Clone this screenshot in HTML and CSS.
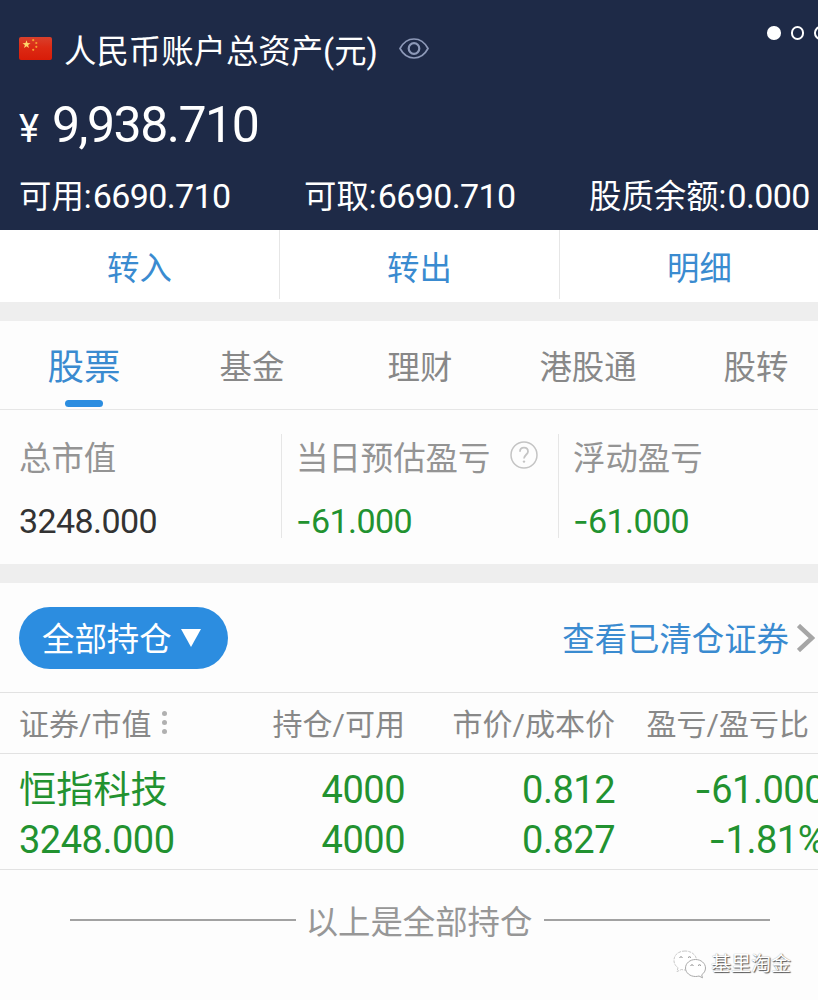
FILE: index.html
```html
<!DOCTYPE html>
<html lang="zh-CN">

<head>
  <meta charset="UTF-8">
  <meta name="viewport" content="width=device-width, initial-scale=1.0">
  <title>资产</title>
  <link rel="stylesheet" href="styles.css">
</head>

<body>
  <div class="page">
    <!-- 总资产 -->
    <div class="asset">
      <div class="dots"><i class="on"></i><i></i><i></i></div>
      <div class="asset-t">
        <svg class="flag" viewBox="0 0 33 23" width="33" height="23">
          <defs>
            <linearGradient id="red" x1="0" y1="0" x2="0" y2="1">
              <stop offset="0" stop-color="#d8402c" />
              <stop offset=".45" stop-color="#dc2a14" />
              <stop offset="1" stop-color="#d81c08" />
            </linearGradient>
          </defs>
          <rect width="33" height="23" rx="2" fill="url(#red)" />
          <path d="M7.500 3.200l1 2.900 3 .1-2.400 1.800.8 2.900-2.400-1.700-2.500 1.700.9-2.900L3.500 6.200l3-.1z" fill="#ffd76a" />
          <g fill="#f5a030">
            <circle cx="14.200" cy="3.200" r="1.100" />
            <circle cx="17.300" cy="6" r="1.100" />
            <circle cx="17.300" cy="9.800" r="1.100" />
            <circle cx="14.200" cy="12.800" r="1.100" />
          </g>
        </svg>
        <span class="title">人民币账户总资产(元)</span>
        <svg class="eye" viewBox="0 0 30 21" width="30" height="21" fill="none" stroke="#8d99b8" stroke-width="1.700">
          <path d="M1 10.500C4.500 4 9.500 1 15 1s10.500 3 14 9.500C25.500 17 20.500 20 15 20S4.500 17 1 10.500z" />
          <circle cx="15" cy="10.500" r="5.300" stroke-width="2.200" />
        </svg>
      </div>
      <div class="asset-n"><span class="yen">¥</span><span class="total">9,938.710</span></div>
      <div class="asset-f">
        <div>可用:<span class="num">6690.710</span></div>
        <div>可取:<span class="num">6690.710</span></div>
        <div>股质余额:<span class="num">0.000</span></div>
      </div>
    </div>

    <div class="actions">
      <a>转入</a>
      <a>转出</a>
      <a>明细</a>
    </div>

    <div class="tabs">
      <div class="tab active">股票</div>
      <div class="tab">基金</div>
      <div class="tab">理财</div>
      <div class="tab">港股通</div>
      <div class="tab">股转</div>
    </div>

    <div class="stats">
      <div class="stat">
        <div class="stat-t">总市值</div>
        <div class="stat-n">3248.000</div>
      </div>
      <div class="stat">
        <div class="stat-t">当日预估盈亏
          <svg class="help" viewBox="0 0 28 28" width="28" height="28" fill="none" stroke="#c4c4c4" stroke-width="1.500">
            <circle cx="14" cy="14" r="13" />
            <path d="M10 10.800c0-2.600 1.700-4.200 4-4.200s4 1.500 4 3.800c0 3.200-4 3.600-4 7.200" stroke-width="1.800" />
            <circle cx="14" cy="20.600" r="1.200" fill="#c4c4c4" stroke="none" />
          </svg>
        </div>
        <div class="stat-n green"><span class="minus">-</span>61.000</div>
      </div>
      <div class="stat">
        <div class="stat-t">浮动盈亏</div>
        <div class="stat-n green"><span class="minus">-</span>61.000</div>
      </div>
    </div>

    <!-- 持仓 -->
    <div class="bar">
      <div class="pill"><span>全部持仓</span>
        <svg viewBox="0 0 20 18" width="20" height="18"><path d="M0 0h20L10 18z" fill="#fff" /></svg>
      </div>
      <div class="link"><span>查看已清仓证券</span>
        <svg viewBox="0 0 18 28" width="18" height="28"><path d="M1.500 1.500L15 14 1.500 26.500" fill="none" stroke="#a6a6a6" stroke-width="4.500" /></svg>
      </div>
    </div>

    <div class="row head">
      <div>证券/市值<span class="more"><i></i><i></i><i></i></span></div>
      <div>持仓/可用</div>
      <div>市价/成本价</div>
      <div>盈亏/盈亏比</div>
    </div>
    <div class="row data">
      <div><p class="name">恒指科技</p><p>3248.000</p></div>
      <div><p>4000</p><p>4000</p></div>
      <div><p>0.812</p><p>0.827</p></div>
      <div><p><span class="minus">-</span>61.000</p><p><span class="minus">-</span>1.81%</p></div>
    </div>

    <div class="end"><span>以上是全部持仓</span></div>

    <div class="mark">
      <svg viewBox="0 0 34 29" width="34" height="29" fill="#fff" stroke="#a9a9a9" stroke-width="1">
        <path stroke="#c8c8c8" stroke-dasharray="3 1" d="M12 1C5.500 1 1 5 1 10.500c0 3 1.500 5.500 4 7.200L4 21.500l4.500-2c1.500.4 3 .5 4.500.5 6 0 10.500-4 10.500-9.500S18.500 1 12 1z" />
        <path d="M22.500 9.500c-5.500 0-10 3.800-10 8.500s4.500 8.500 10 8.500c1.200 0 2.500-.2 3.500-.5l3.500 1.800-.8-3c2.300-1.600 3.800-4 3.800-6.800 0-4.700-4.500-8.500-10-8.500z" />
        <path fill="none" stroke="#8a8a8a" d="M6.500 7.500q1.500-1.500 3 0M15 7.500q1.500-1.500 3 0M17.500 15.500q1.500-1.500 3 0M25 15.500q1.500-1.500 3 0" />
      </svg>
      <span>基里淘金</span>
    </div>
  </div>
</body>

</html>
```
FILE: styles.css
```css
* {
  box-sizing: border-box;
}

body {
  margin: 0;
  height: 1000px;
  overflow: hidden;
  background: #fdfdfd;
  font-family: Roboto, "Noto Sans CJK SC", sans-serif;
  font-size: 32.4px;
  color: #888;
}

p {
  margin: 0;
}

.page {
  width: 840px;
  height: 1000px;
  position: relative;
}

/* 顶部 */
.asset {
  height: 230px;
  background: #1e2a47;
  color: #fff;
  position: relative;
  padding: 25px 0 0 19px;
}

.dots {
  position: absolute;
  top: 26px;
  left: 767px;
  display: flex;
  gap: 10px;
}

.dots i {
  width: 13.5px;
  height: 13.5px;
  border: 2px solid #fff;
  border-radius: 50%;
}

.dots .on {
  background: #fff;
}

.asset-t {
  display: flex;
  align-items: center;
  height: 46px;
}

.title {
  margin: 1px 21px 0 12px;
}

.asset-n {
  display: flex;
  align-items: baseline;
  height: 81px;
  line-height: 108px;
}

.yen {
  width: 33px;
  font-size: 38px;
}

.total {
  font-size: 50px;
  letter-spacing: -1.5px;
}

.asset-f {
  display: grid;
  grid-template-columns: 285px 285px 270px;
  line-height: 48px;
  margin-top: 20px;
  white-space: nowrap;
}

.asset-f .num {
  margin-left: 1px;
  font-size: 34px;
  letter-spacing: -.6px;
}

/* 转入转出 */
.actions {
  display: grid;
  grid-template-columns: repeat(3, 1fr);
  height: 91px;
  background: #fff;
  border-bottom: 19px solid #eee;
  line-height: 79px;
  text-align: center;
  color: #3a8bd0;
}

.actions a {
  height: 69px;
  border-right: 1px solid #e6e6e6;
}

.tabs {
  display: grid;
  grid-template-columns: repeat(5, 1fr);
  height: 89px;
  border-bottom: 1px solid #e6e6e6;
  line-height: 94px;
  text-align: center;
}

.tab {
  height: 88px;
}

.tab.active {
  position: relative;
  font-size: 36.5px;
  color: #3a8bd0;
}

.tab.active::after {
  content: "";
  position: absolute;
  left: 65px;
  bottom: 2px;
  width: 38px;
  height: 7px;
  border-radius: 4px;
  background: #2c8de0;
}

/* 市值盈亏 */
.stats {
  display: grid;
  grid-template-columns: 281px 277px 282px;
  height: 173px;
  padding-top: 24px;
  border-bottom: 19px solid #eee;
}

.stat {
  height: 104px;
  padding-left: 14px;
  border-left: 1px solid #e6e6e6;
}

.stat:first-child {
  padding-left: 19px;
  border-left: 0;
}

.stat-t {
  display: flex;
  align-items: center;
  height: 42px;
  color: #949494;
}

.help {
  margin: 0 0 0 20px;
}

.stat-n {
  margin-top: 21px;
  font-size: 34px;
  line-height: 48px;
  letter-spacing: -.6px;
  color: #333;
}

.stat-n.green {
  color: #229230;
}

.minus {
  font-family: Inter, sans-serif;
  line-height: 1;
}

.bar {
  display: flex;
  justify-content: space-between;
  align-items: center;
  height: 109px;
  padding: 0 25px 0 19px;
}

.pill {
  display: flex;
  align-items: center;
  gap: 9px;
  width: 209px;
  height: 62px;
  padding-left: 23px;
  border-radius: 31px;
  background: #2c8de0;
  color: #fff;
}

.pill span {
  margin-top: -2px;
}

.link {
  display: flex;
  align-items: center;
  gap: 8px;
  color: #3a8bd0;
}

.link span {
  margin-top: -2px;
}

/* 列表 */
.row {
  display: grid;
  grid-template-columns: 176px 210px 210px 210px;
  padding-left: 19px;
  border-top: 1px solid #e2e2e2;
  text-align: right;
  white-space: nowrap;
}

.row > div:first-child {
  text-align: left;
}

.head {
  height: 61px;
  font-size: 30px;
  line-height: 64px;
}

.head > div:first-child {
  display: flex;
  align-items: center;
}

.head > div:last-child {
  padding-right: 16px;
}

.more {
  display: flex;
  flex-direction: column;
  gap: 4px;
  margin: -6px 0 0 11px;
}

.more i {
  width: 5px;
  height: 5px;
  border-radius: 50%;
  background: #b0b0b0;
}

.data {
  height: 117px;
  padding-top: 11px;
  border-bottom: 1px solid #e2e2e2;
  font-size: 38px;
  line-height: 50px;
  letter-spacing: -.5px;
  color: #229230;
}

.data p {
  height: 50px;
}

.data .name {
  font-size: 37.2px;
  letter-spacing: 0;
}

.end {
  display: flex;
  align-items: center;
  gap: 11px;
  height: 100px;
  padding: 0 70px;
  color: #979797;
}

.end span {
  margin: -1px 1px 0 -1px;
}

.end::before,
.end::after {
  content: "";
  flex: 1;
  height: 2px;
  background: #a2a2a2;
}

/* 水印 */
.mark {
  position: absolute;
  left: 673px;
  top: 949px;
  display: flex;
  align-items: center;
  gap: 4px;
  font-size: 20px;
  line-height: 30px;
  color: #fff;
  text-shadow: 1px 1px 1px #555, 0 0 1px #999;
}
```
